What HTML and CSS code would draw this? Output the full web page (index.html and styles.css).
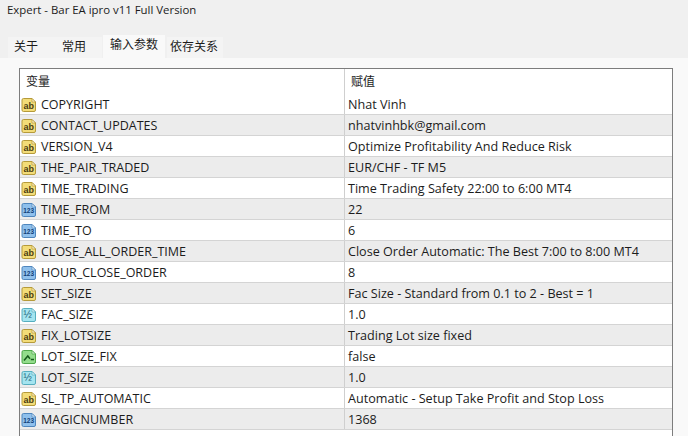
FILE: index.html
```html
<!DOCTYPE html>
<html lang="en">
<head>
    <meta charset="UTF-8">
    <meta name="viewport" content="width=device-width, initial-scale=1.0">
    <title>Expert - Bar EA ipro v11 Full Version</title>
    <link rel="stylesheet" href="styles.css">
</head>
<body>
    <div class="title">Expert - Bar EA ipro v11 Full Version</div>

    <div class="tabs">
        <div class="tab">关于</div>
        <div class="tab">常用</div>
        <div class="tab active">输入参数</div>
        <div class="tab wide">依存关系</div>
    </div>

    <div class="panel">
        <div class="list" id="list">
            <div class="row head"><div class="name">变量</div><div class="value">赋值</div></div>
            <!-- Rows are added by script.js -->
        </div>
    </div>

    <script src="script.js"></script>
</body>
</html>
```

FILE: script.js
```js
// 参数列表
const params = [
    { type: "ab", name: "COPYRIGHT", value: "Nhat Vinh" },
    { type: "ab", name: "CONTACT_UPDATES", value: "nhatvinhbk@gmail.com" },
    { type: "ab", name: "VERSION_V4", value: "Optimize Profitability And Reduce Risk" },
    { type: "ab", name: "THE_PAIR_TRADED", value: "EUR/CHF - TF M5" },
    { type: "ab", name: "TIME_TRADING", value: "Time Trading Safety 22:00 to 6:00 MT4" },
    { type: "num", name: "TIME_FROM", value: "22" },
    { type: "num", name: "TIME_TO", value: "6" },
    { type: "ab", name: "CLOSE_ALL_ORDER_TIME", value: "Close Order Automatic: The Best 7:00 to 8:00 MT4" },
    { type: "num", name: "HOUR_CLOSE_ORDER", value: "8" },
    { type: "ab", name: "SET_SIZE", value: "Fac Size - Standard from 0.1 to 2 - Best = 1" },
    { type: "half", name: "FAC_SIZE", value: "1.0" },
    { type: "ab", name: "FIX_LOTSIZE", value: "Trading Lot size fixed" },
    { type: "bool", name: "LOT_SIZE_FIX", value: "false" },
    { type: "half", name: "LOT_SIZE", value: "1.0" },
    { type: "ab", name: "SL_TP_AUTOMATIC", value: "Automatic - Setup Take Profit and Stop Loss" },
    { type: "num", name: "MAGICNUMBER", value: "1368" }
];

const iconInner = {
    ab: '<text x="2.4" y="11.6" class="icon-text">ab</text>',
    num: '<text x="2.2" y="11.4" class="icon-text small">123</text>',
    half: '<text x="2.6" y="11.4" class="icon-text small">½</text>',
    bool: '<path d="M3 11.5 L6.8 7 L9 9.8 M9.8 10.6 H13" fill="none" stroke="#14591a" stroke-width="1.5"/>'
};

function iconHtml(type) {
    return `
        <svg class="icon icon-${type}" viewBox="0 0 16 16">
            <path class="sheet" d="M2.5 1.5 H11 L14.5 5 V13 Q14.5 14.5 13 14.5 H2.5 Q1 14.5 1 13 V3 Q1 1.5 2.5 1.5 Z"/>
            <path class="fold" d="M11 1.5 V5 H14.5 Z"/>
            ${iconInner[type]}
        </svg>`;
}

const list = document.getElementById("list");

params.forEach((item) => {
    const row = document.createElement("div");
    row.className = "row";
    row.innerHTML = `
        <div class="name">${iconHtml(item.type)}${item.name}</div>
        <div class="value">${item.value}</div>
    `;
    list.appendChild(row);
});
```

FILE: styles.css
```css
body {
    margin: 0;
    height: 436px;
    overflow: hidden;
    background-color: #f0f0f0;
    color: #1c1c1c;
    font-family: "Open Sans", "Noto Sans CJK SC", sans-serif;
    font-size: 12.5px;
}

.title {
    height: 34px;
    padding: 1px 0 0 7px;
    box-sizing: border-box;
    font-size: 11.4px;
    line-height: 17px;
}

.tabs {
    display: flex;
    height: 24px;
    padding-left: 8px;
    font-size: 12px;
}

.tab {
    width: 47px;
    margin-top: 3px;
    padding-left: 6px;
    box-sizing: border-box;
    line-height: 20px;
    white-space: nowrap;
    background-color: #f4f4f4;
}

.tab + .tab {
    padding-left: 7px;
}

.tab.active {
    width: 62px;
    margin-top: 1px;
    margin-left: 1px;
    margin-right: 2px;
    background-color: #f9f9f9;
}

.tab.wide {
    width: 56px;
    padding-left: 3px;
}

.panel {
    height: 378px;
    padding: 10px 15px 0 19px;
    box-sizing: border-box;
    background-color: #f9f9f9;
}

.list {
    height: 100%;
    border: 1px solid #7d7d7d;
    border-bottom: none;
    background-color: #fff;
}

.row {
    display: flex;
    height: 21px;
    box-sizing: border-box;
    line-height: 22px;
    border-bottom: 1px solid #d4d4d4;
}

.row:nth-child(odd) {
    background-color: #ececec;
}

.row.head {
    height: 25px;
    line-height: 25px;
    font-size: 12px;
    background-color: #fff;
    border-bottom: none;
}

.name {
    display: flex;
    align-items: center;
    gap: 4px;
    width: 325px;
    padding-top: 1px;
    padding-left: 1px;
    box-sizing: border-box;
    border-right: 1px solid #cfcfcf;
}

.head .name {
    padding-top: 0;
    padding-left: 6px;
}

.value {
    flex: 1;
    padding-left: 3px;
    font-size: 12.6px;
}

.head .value {
    padding-left: 6px;
    font-size: 12px;
}

.icon {
    width: 16px;
    height: 16px;
    flex: none;
}

.sheet {
    stroke-width: 1;
}

.fold {
    stroke-width: 0.7;
}

.icon-text {
    font-family: "Liberation Sans", sans-serif;
    font-size: 9px;
    font-weight: bold;
}

.icon-text.small {
    font-size: 6.5px;
}

.icon-ab .sheet { fill: #f3dc78; stroke: #b59a3a; }
.icon-ab .fold { fill: #fff6c8; stroke: #b59a3a; }
.icon-ab .icon-text { fill: #4a3c10; }

.icon-num .sheet { fill: #8fc0ec; stroke: #4f86bd; }
.icon-num .fold { fill: #dcedfb; stroke: #4f86bd; }
.icon-num .icon-text { fill: #123f78; }

.icon-half .sheet { fill: #a4e4ef; stroke: #56aebf; }
.icon-half .fold { fill: #e0f8fb; stroke: #56aebf; }
.icon-half .icon-text { fill: #1d5f78; font-size: 10px; font-weight: normal; }

.icon-bool .sheet { fill: #93dd8c; stroke: #4ea64a; }
.icon-bool .fold { fill: #dbf6d8; stroke: #4ea64a; }
```
